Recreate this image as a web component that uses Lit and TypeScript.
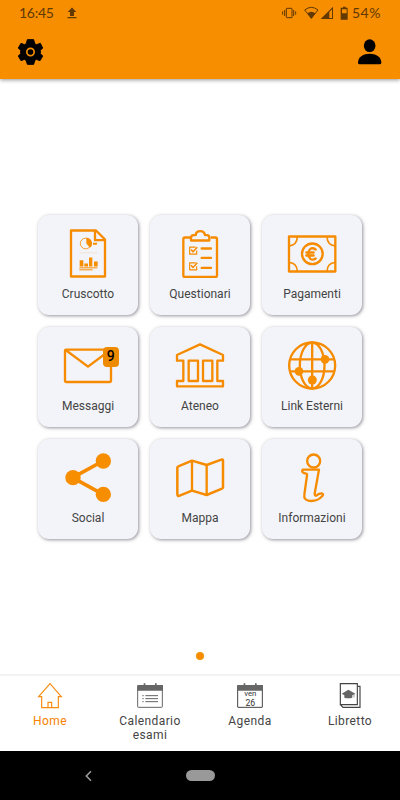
import { LitElement, html, svg, css } from "lit";
import { customElement } from "lit/decorators.js";

const tiles = [
  {
    label: "Cruscotto", box: "24 28.5 300 210", space: 0,
    art: svg`<path class="l" stroke-width="6" d="M123 75H198L225 102V213H123Z"/><path class="l" stroke-width="6" stroke-linejoin="miter" d="M195 76V104H226"/>
      <circle class="l" stroke-width="2.5" cx="167" cy="114" r="16"/><path class="f" d="M169 97A17 17 0 0 1 180 127L169 114ZM189 112H202L200 118H189Z"/>
      <path class="l" stroke-width="2" d="M149 142H202" stroke-dasharray="3 3" opacity=".5"/>
      <path class="f" d="M149 164H160V183H149ZM163 174H174V183H163ZM177 156H187V183H177ZM192 168H203V183H192Z"/>
      <path class="l" stroke-width="3" d="M148 187H202M148 193H188"/>`,
  },
  {
    label: "Questionari", box: "24 28.5 300 210", space: 0,
    art: svg`<path class="l" stroke-width="6" d="M144 96H129Q124 96 124 101V209Q124 214 129 214H220Q225 214 225 209V101Q225 96 220 96H206"/>
      <path class="l" stroke-width="6" d="M147 105V97Q147 89 155 89H161Q162 77 175 77Q187 77 189 89H195Q202 89 202 97V105Z"/>
      <path class="l" stroke-width="3.5" d="M161 125H143V146H164V135M161 172H143V193H164V182"/>
      <path class="l" stroke-width="4.5" d="M147 132L153 139L166 125M147 179L153 186L166 172"/>
      <path class="l" stroke-width="7" stroke-linecap="round" d="M179 129H207M179 157H207M179 187H207"/>`,
  },
  {
    label: "Pagamenti", box: "21 28.5 300 210", space: 0,
    art: svg`<path class="l" stroke-width="6" d="M102 93H241V198H102Z"/><circle class="l" stroke-width="6" cx="172" cy="145" r="31"/>
      <path class="l" stroke-width="5" d="M127 94Q126 119 103 121M216 94Q217 119 240 121M127 197Q126 173 103 171M216 197Q217 173 240 171"/>
      <path class="l" stroke-width="6" stroke-linecap="round" d="M182 132C169 123 160 132 160 145S169 168 182 159M154 141H176M154 150H176"/>`,
  },
  {
    label: "Messaggi", box: "24 20 300 210", space: 0, badge: "9",
    art: svg`<rect class="l" stroke-width="6" x="105" y="88" width="138" height="97" rx="3"/><path class="l" stroke-width="6" d="M107 89L174 139L241 89"/>`,
  },
  {
    label: "Ateneo", box: "24 20 300 210", space: 0,
    art: svg`<path class="l" stroke-width="6" d="M105 104L174 72L243 104V121H226V182H243V198H105V182H124V121H105ZM140 121H168V182H140ZM183 121H211V182H183Z"/>`,
  },
  {
    label: "Link Esterni", box: "21 20 300 210", space: 0,
    art: svg`<circle class="l" stroke-width="6" cx="171.500" cy="135.500" r="69"/><ellipse class="l" stroke-width="6" cx="171.500" cy="135.500" rx="37" ry="69"/>
      <path class="l" stroke-width="6" d="M171.500 67V204M105 117H238M105 153H238"/><circle class="f" cx="210" cy="117" r="13"/><circle class="f" cx="132" cy="153" r="13"/><circle class="f" cx="172" cy="179" r="13.500"/>`,
  },
  {
    label: "Social", box: "24 20 300 210", space: 0,
    art: svg`<path class="l" stroke-width="11" d="M219 86L128 136L219 186"/><circle class="f" cx="220" cy="86" r="23"/><circle class="f" cx="129" cy="136" r="23"/><circle class="f" cx="220" cy="186" r="23"/>`,
  },
  {
    label: "Mappa", box: "360 20 300 210", space: 0,
    art: svg`<path class="l" stroke-width="7.500" d="M442 106Q442 103 445 102L486 85L530 98L574 82Q579 80 579 85V165Q579 168 576 169L530 188L486 175L449 190Q442 193 442 186Z"/><path class="l" stroke-width="6" d="M486 85V175M530 98V188"/>`,
  },
  {
    label: "Informazioni", box: "186 20 300 210", space: 0,
    art: svg`<circle class="l" stroke-width="6" cx="341" cy="86" r="19.500"/>
      <path class="l" stroke-width="6" d="M308 112H357L344 184Q344 191 350 189Q356 183 365 183Q372 185 367 191C355 204 347 206 333 206C318 206 311 198 313 187L321 129Q322 122 314 123Q303 119 308 112Z"/>`,
  },
];

const tabs = [
  {
    label: "Home", active: true,
    art: svg`<path fill="none" stroke="#f88c12" stroke-width="3.500" d="M116 155L150 116L184 155H175V188H125V155ZM144 188V172H155V188"/>`,
  },
  {
    label: "Calendario esami",
    art: svg`<rect x="113" y="122" width="74" height="65" rx="2" fill="none" stroke="#666" stroke-width="3"/><path fill="#666" d="M112 120H189V137H112ZM131 115H136V122H131ZM165 115H170V122H165Z"/>
      <path stroke="#555" stroke-width="2.800" d="M127 152H131M136 152H174M127 161H131M136 161H174M127 170H131M136 170H174"/>`,
  },
  {
    label: "Agenda",
    art: svg`<rect x="113" y="122" width="74" height="65" rx="1" fill="none" stroke="#444" stroke-width="3"/><path fill="#666" d="M112 120H189V137H112ZM131 115H136V122H131ZM165 115H170V122H165Z"/>
      <text x="151" y="153" font-size="23.500" text-anchor="middle">ven</text><text x="151" y="183" font-size="26" text-anchor="middle">26</text>`,
  },
  {
    label: "Libretto",
    art: svg`<path fill="none" stroke="#444" stroke-width="3.500" d="M121 116H172V179H121ZM174 124H180V187H129L122 180"/><path fill="#666" d="M125 146L145 134L166 146L157 151V158Q145 162 133 158V151Z"/><path stroke="#666" stroke-width="2" d="M162 147V157"/>`,
  },
];

@customElement("app-root")
export class AppRoot extends LitElement {
  static styles = css`
    :host { display: flex; flex-direction: column; width: 400px; height: 800px; overflow: hidden; background: #fff; font-family: Roboto, sans-serif; color: #444; }
    * { box-sizing: border-box; }
    svg { display: block; }
    header { height: 79px; flex: none; background: #f68e00; box-shadow: 0 1px 4px rgba(0, 0, 0, .42); }
    .status { display: flex; height: 26px; align-items: center; padding: 0 18px 0 19px; color: #623900; font: 14px/26px Lato, sans-serif; }
    .clock { width: 48px; letter-spacing: -.25px; }
    .pct { letter-spacing: .5px; width: 30px; white-space: nowrap; }
    .grow { flex: 1; }
    .actions { display: flex; justify-content: space-between; padding: 12px 17px 0; }
    main { flex: 1; display: flex; flex-direction: column; align-items: center; padding-top: 135.500px; }
    .grid { display: grid; grid-template-columns: repeat(3, 100.500px); grid-auto-rows: 100.300px; gap: 11.900px 11.500px; }
    .card { position: relative; border-radius: 11px; background: #f3f4f9; box-shadow: 1px 1px 3.500px rgba(40, 40, 55, .5); text-align: center; }
    .card svg { width: 100px; height: 70px; }
    .name { font-size: 12px; line-height: 18px; }
    .l { fill: none; stroke: #f68b00; stroke-linejoin: round; }
    .card .l[stroke-width="6"] { stroke-width: 7; }
    .f { fill: #f68e00; }
    .badge { position: absolute; left: 65px; top: 20.500px; width: 16px; height: 20px; border-radius: 4px; background: #ee8a00; color: #000; font-size: 14px; font-weight: 500; line-height: 18px; }
    .dot { width: 8px; height: 8px; border-radius: 50%; background: #f68e00; margin-top: 112.700px; }
    nav { display: flex; height: 77px; flex: none; border-top: 2px solid #f3f3f3; }
    .tab { flex: 1; display: flex; flex-direction: column; align-items: center; font-size: 12px; line-height: 14.300px; letter-spacing: .4px; text-align: center; padding: 6px 10px 0; }
    .tab svg { width: 28px; height: 28px; margin-bottom: 3.500px; }
    .tab text { fill: #333; letter-spacing: 0; }
    .active { color: #f58200; }
    footer { height: 49px; flex: none; background: #000; display: flex; align-items: center; padding-left: 84px; }
    .pill { width: 29px; height: 10.500px; border-radius: 6px; background: #999; margin-left: 92px; }
  `;

  render() {
    return html`
      <header>
        <div class="status">
          <span class="clock">16:45</span>
          <svg width="10" height="12" viewBox="0 0 10 12" fill="currentColor"><path d="M5 .5L9.300 5H7V9H3V5H.7ZM.5 10H9.500V11.200H.5Z"/></svg>
          <span class="grow"></span>
          <svg width="70" height="14" viewBox="246 15 210 42" fill="none" stroke="currentColor" stroke-width="3">
            <rect x="259" y="22" width="17" height="28" rx="1"/><path d="M254 27V45M248 31V41M281 27V45M287 31V41"/>
            <path d="M314 27Q334 11 354 27L334 52Z"/><path fill="currentColor" stroke="none" d="M322 37Q334 28 346 37L334 53ZM362 54L399 17V54ZM424 20H429V17H437V20H443V56H422V20Z"/>
            <path fill="#f68e00" stroke="none" d="M388 33L396 25V51H388ZM426 25H440V37H426Z"/>
          </svg>
          <span class="pct">54%</span>
        </div>
        <div class="actions">
          <svg width="27" height="28" viewBox="51 114 81 84"><path fill="#000" stroke="#000" stroke-width="3" stroke-linejoin="round" d="M82 119H101L104 131L110 134L121 130L128 144L121 151V161L128 168L120 182L109 178L104 182L101 193H82L79 182L73 178L63 182L55 168L62 161V151L55 144L63 130L73 134L79 131Z"/><circle cx="91.500" cy="156" r="11" fill="#000" stroke="#f68e00" stroke-width="5"/></svg>
          <svg width="26" height="28" viewBox="471 114 78 84"><ellipse cx="509" cy="137" rx="17.500" ry="19"/><path d="M474 188C474 170 491 161 509 161S544 170 544 188Q544 193 539 193H479Q474 193 474 188Z"/></svg>
        </div>
      </header>
      <main>
        <div class="grid">
          ${tiles.map((t) => html`<div class="card">
            <svg viewBox=${t.box}>${t.art}</svg>
            <div class="name" style="letter-spacing:${t.space}px">${t.label}</div>
            ${t.badge ? html`<span class="badge">${t.badge}</span>` : null}
          </div>`)}
        </div>
        <div class="dot"></div>
      </main>
      <nav>
        ${tabs.map((t) => html`<div class="tab ${t.active ? "active" : ""}">
          <svg viewBox="108 111 84 84">${t.art}</svg><span>${t.label}</span>
        </div>`)}
      </nav>
      <footer>
        <svg width="10" height="12" viewBox="0 0 10 12" fill="none" stroke="#999" stroke-width="1.600"><path d="M7 1.200L2.300 6L7 10.800"/></svg>
        <div class="pill"></div>
      </footer>
    `;
  }
}
